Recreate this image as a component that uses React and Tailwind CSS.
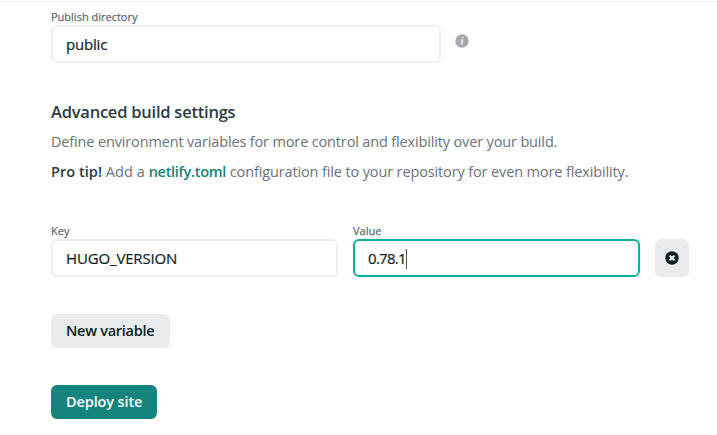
function Label({ children, className = '' }) {
  return <div className={`h-[16px] text-[11px] leading-[16px] text-[#636e72] [-webkit-text-stroke:0.25px_#636e72] ${className}`}><span>{children}</span></div>;
}

function Field({ children, active = false, className = '' }) {
  return (
    <div
      className={`flex items-center rounded-[6px] border-2 bg-white pl-[13px] pt-px text-[#0e1e25] [-webkit-text-stroke:0.2px_#0e1e25] ${
        active ? 'border-[#10b0a3]' : 'border-[#eeeff0]'
      } ${className}`}
    >
      {children}
    </div>
  );
}

export default function App() {
  return (
    <main className="h-[435px] w-[717px] overflow-hidden bg-white pt-px font-['Open_Sans','Noto_Sans',sans-serif] text-[#6b7377]">
      <div className="h-px bg-[#e9ebed]" />
      <div className="pl-[51px] pt-[7px]">
        <Label>Publish directory</Label>
        <div className="flex items-center">
          <Field className="h-[38px] w-[390px] text-[15px] tracking-[-0.2px]"><span>public</span></Field>
          <svg className="mb-[6px] ml-[13.5px] size-[14px]" viewBox="0 0 14 14">
            <circle cx="7" cy="7" r="6.7" fill="#a3a9ac" />
            <path d="M7.3 3.7h1.1M6 6.2h1.5l-.8 3.6M5.7 9.9h1.9" fill="none" stroke="#fff" strokeWidth="1.2" />
          </svg>
        </div>

        <h2 className="mt-[36px] h-[26px] text-[16.5px] font-semibold leading-[26px] tracking-[-0.23px] text-[#2d3b41]"><span>Advanced build settings</span></h2>
        <p className="mt-[5px] h-[24px] whitespace-nowrap text-[14.5px] leading-[24px] tracking-[-0.15px]"><span>Define environment variables for more control and flexibility over your build.</span></p>
        <p className="mt-[6px] h-[24px] whitespace-nowrap text-[14.5px] leading-[24px] tracking-[-0.13px]">
          <span><b className="font-semibold tracking-[0.05px] text-[#2d3b41]">Pro tip!</b><span className="tracking-[0.05px]"> Add a </span><a className="font-semibold tracking-[-0.28px] text-[#15847d]">netlify.toml</a> configuration file to your repository for even more flexibility.</span>
        </p>

        <div className="mt-[39px] flex items-start">
          <div className="w-[287px]">
            <Label>Key</Label>
            <Field className="h-[38px] text-[15px] tracking-[-0.15px]"><span>HUGO_VERSION</span></Field>
          </div>
          <div className="ml-[15px] w-[287px]">
            <Label>Value</Label>
            <Field active className="h-[38px] text-[15px] tracking-[-0.7px]"><span>0.78.1</span><i className="h-[20px] w-px bg-[#4d585d]" /></Field>
          </div>
          <button className="ml-[15px] mt-[16px] flex h-[37.5px] w-[33.5px] items-center justify-center rounded-[6px] bg-[#e9ebed]">
            <svg className="size-[14px]" viewBox="0 0 14 14">
              <circle cx="7" cy="7" r="6.7" fill="#0e1e25" />
              <path d="M4.6 4.6l4.8 4.8M9.4 4.6L4.6 9.4" stroke="#fff" strokeWidth="2" />
            </svg>
          </button>
        </div>

        <button className="mt-[37px] flex h-[33.5px] w-[118.5px] items-center rounded-[6px] bg-[#e9ebed] pl-[15px] pt-px text-[14.5px] font-semibold tracking-[-0.27px] text-[#0e1e25]"><span className="whitespace-nowrap">New variable</span></button>
        <button className="mt-[37.5px] flex h-[33.5px] w-[106px] items-center rounded-[6px] bg-[#15847d] pl-[15px] pt-px text-[14.5px] font-semibold tracking-[-0.12px] text-white"><span className="whitespace-nowrap">Deploy site</span></button>
      </div>
    </main>
  );
}
